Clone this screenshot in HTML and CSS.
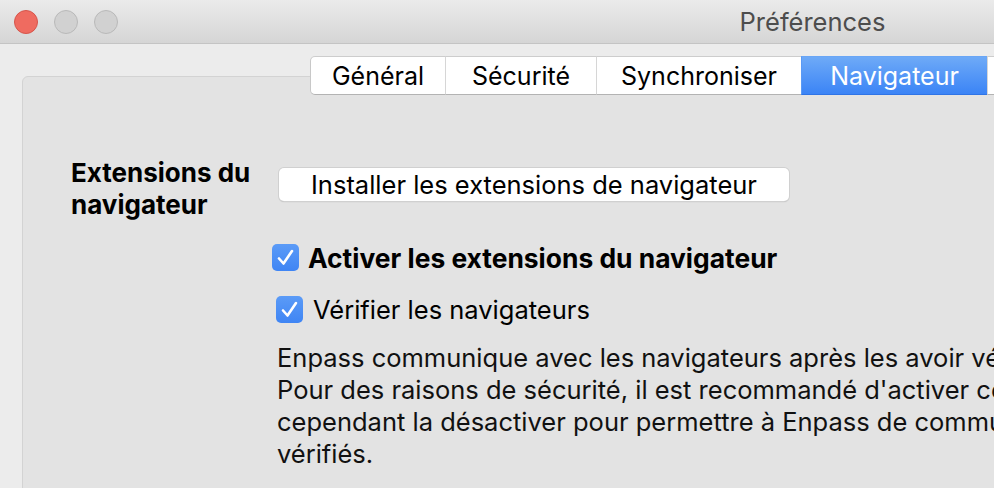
FILE: index.html
```html
<!DOCTYPE html>
<html lang="fr">
<head>
<meta charset="utf-8">
<title>Préférences</title>
<link rel="stylesheet" href="styles.css">
</head>
<body>
<div class="window">
  <div class="titlebar">
    <div class="lights">
      <span class="light close"></span>
      <span class="light"></span>
      <span class="light"></span>
    </div>
    <div class="title">Préférences</div>
  </div>
  <div class="content">
    <div class="tabbar">
      <div class="tab t-gen">Général</div>
      <div class="tab t-sec">Sécurité</div>
      <div class="tab t-syn">Synchroniser</div>
      <div class="tab t-nav active">Navigateur</div>
      <div class="tab t-adv">Avancé</div>
    </div>
    <div class="groupbox">
      <div class="row">
        <div class="label">Extensions du<br>navigateur</div>
        <div class="controls">
          <button class="btn">Installer les extensions de navigateur</button>
          <label class="check bold">
            <span class="box"><svg viewBox="0 0 27 27" width="27" height="27"><path d="M7 14.5 L11.5 19.5 L20 7" fill="none" stroke="#fff" stroke-width="2.6" stroke-linecap="round" stroke-linejoin="round"/></svg></span>
            <span>Activer les extensions du navigateur</span>
          </label>
          <label class="check sub">
            <span class="box"><svg viewBox="0 0 27 27" width="27" height="27"><path d="M7 14.5 L11.5 19.5 L20 7" fill="none" stroke="#fff" stroke-width="2.6" stroke-linecap="round" stroke-linejoin="round"/></svg></span>
            <span>Vérifier les navigateurs</span>
          </label>
          <p class="desc">Enpass communique avec les navigateurs après les avoir vérifiés.<br>Pour des raisons de sécurité, il est recommandé d'activer cette option. Vous pouvez<br>cependant la désactiver pour permettre à Enpass de communiquer avec des navigateurs non<br>vérifiés.</p>
        </div>
      </div>
    </div>
  </div>
</div>
</body>
</html>
```

FILE: styles.css
```css
html, body {
  margin: 0;
  padding: 0;
  width: 994px;
  height: 488px;
  overflow: hidden;
  background: #ececec;
}

body {
  font-family: "Inter", "Roboto", "Liberation Sans", sans-serif;
  color: #000;
}

.window {
  width: 1625px;
  height: 488px;
  background: #ececec;
}

.titlebar {
  height: 43px;
  border-bottom: 1px solid #c4c4c4;
  background: linear-gradient(#ebebeb, #d5d5d5);
  display: flex;
  align-items: center;
  position: relative;
}

.lights {
  display: flex;
  gap: 16px;
  padding-left: 14px;
  padding-top: 1px;
}

.light {
  width: 22px;
  height: 22px;
  border-radius: 50%;
  background: #d1d1d1;
  border: 1px solid #b9b9b9;
}

.light.close {
  background: #ef6b60;
  border-color: #d6554b;
}

.title {
  position: absolute;
  left: 0;
  right: 0;
  top: 6px;
  text-align: center;
  font-size: 25.5px;
  line-height: 32px;
  color: #4d4d4d;
}

.content {
  padding: 12px 0 0 22px;
}

.tabbar {
  display: flex;
  margin-left: 288px;
  margin-bottom: -19px;
  position: relative;
  z-index: 1;
}

.tab {
  height: 39px;
  background: #fff;
  border-top: 1px solid #cdcdcd;
  border-bottom: 1px solid #b3b3b3;
  border-left: 1px solid #d6d6d6;
  display: flex;
  align-items: center;
  justify-content: center;
  font-size: 25px;
  box-sizing: border-box;
  padding-top: 1px;
}

.t-gen { width: 135px; border-left: 1px solid #c8c8c8; border-radius: 5px 0 0 5px; }
.t-sec { width: 151px; }
.t-syn { width: 205px; }
.t-nav { width: 186px; }
.t-adv { width: 300px; }

.tab.active {
  background: linear-gradient(#6eaaf7, #3b84f6);
  color: #fff;
  border-color: #5a9af5;
  border-top-color: #6aa6f6;
  border-bottom-color: #2f74e6;
}

.groupbox {
  background: #e3e3e3;
  border: 1px solid #d3d3d3;
  border-radius: 6px;
  height: 500px;
  padding: 80px 0 0 48px;
  box-sizing: border-box;
}

.row {
  display: flex;
}

.label {
  width: 208px;
  font-weight: 700;
  font-size: 26px;
  line-height: 32px;
}

.controls {
  display: flex;
  flex-direction: column;
  align-items: flex-start;
}

.btn {
  width: 510px;
  height: 33px;
  margin-top: 11px;
  background: #fff;
  border: none;
  border-radius: 5px;
  box-shadow: 0 0 0 1px #d0d0d0, 0 1px 1px #a8a8a8;
  font-family: inherit;
  font-size: 25.5px;
  line-height: 33px;
  color: #000;
  padding: 0;
}

.check {
  display: flex;
  align-items: center;
  gap: 9px;
  height: 27px;
  font-size: 25.5px;
  white-space: nowrap;
}

.check.bold {
  font-weight: 700;
  font-size: 26.4px;
  margin-top: 43px;
  margin-left: -7px;
}

.check.sub {
  margin-top: 25px;
  margin-left: -3px;
  gap: 10px;
}

.box {
  flex: none;
  width: 27px;
  height: 27px;
  border-radius: 5px;
  background: linear-gradient(#5b9bf7, #3f85f4);
  display: block;
}

.box svg {
  display: block;
}

.desc {
  margin: 19px 0 0 -2px;
  font-size: 25.5px;
  line-height: 32px;
  white-space: nowrap;
  color: #111;
}
```
